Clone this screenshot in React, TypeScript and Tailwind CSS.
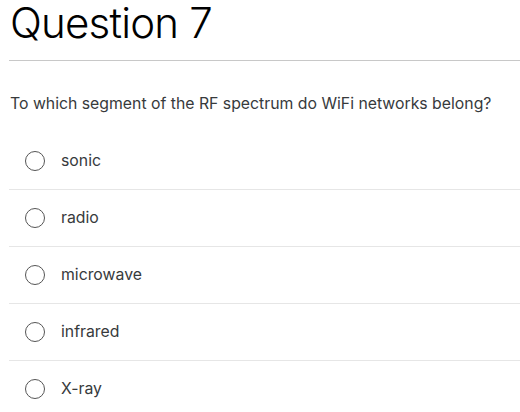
import React from "react";

const options = ["sonic", "radio", "microwave", "infrared", "X-ray"];

const App = () => {
  return (
    <div className="h-[412px] overflow-hidden bg-white pl-[9px] font-['Inter',sans-serif]">
      <h1 className="pl-px text-[42px] font-light leading-[46px] tracking-[-0.8px] text-black">
        Question 7
      </h1>
      <div className="mt-[14px] h-px bg-[#c8c8c8]" />
      <p className="mt-[33px] pl-px text-[15.8px] leading-[20px] text-[#373a3c]">
        To which segment of the RF spectrum do WiFi networks belong?
      </p>
      <ul className="mt-[19px]">
        {options.map((opt) => (
          <li
            key={opt}
            className="flex h-[57px] items-center border-b border-[#e6e6e6] pl-[16px]"
          >
            <span className="h-[20px] w-[20px] rounded-full border border-[#555]" />
            <span className="ml-[16px] text-[15.8px] text-[#373a3c]">{opt}</span>
          </li>
        ))}
      </ul>
    </div>
  );
};

export default App;
